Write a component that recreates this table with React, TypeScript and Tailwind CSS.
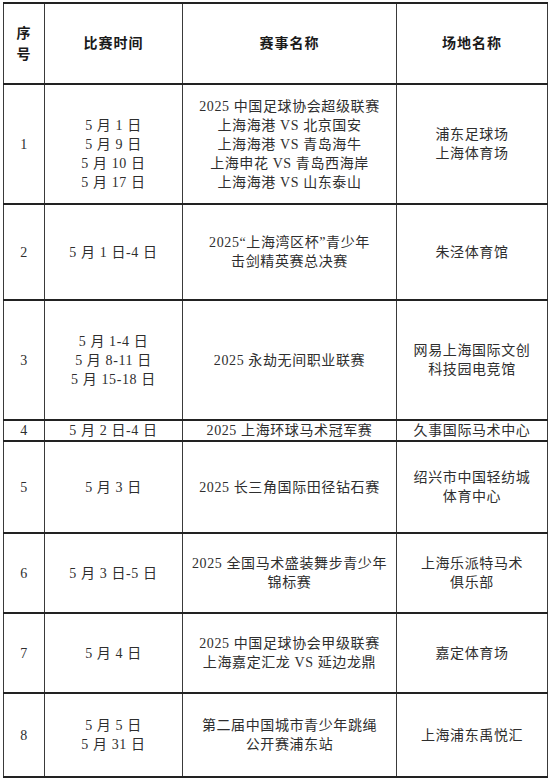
import React from 'react';

type Row = {
    no: string;
    h: string;
    dates: string[];
    events: string[];
    venues: string[];
};

const rows: Row[] = [
    {
        no: '1',
        h: 'h-[120px]',
        dates: ['\u00a0', '5 月 1 日', '5 月 9 日', '5 月 10 日', '5 月 17 日'],
        events: [
            '2025 中国足球协会超级联赛',
            '上海海港 VS 北京国安',
            '上海海港 VS 青岛海牛',
            '上海申花 VS 青岛西海岸',
            '上海海港 VS 山东泰山',
        ],
        venues: ['浦东足球场', '上海体育场'],
    },
    {
        no: '2',
        h: 'h-[96px]',
        dates: ['5 月 1 日-4 日'],
        events: ['2025“上海湾区杯”青少年', '击剑精英赛总决赛'],
        venues: ['朱泾体育馆'],
    },
    {
        no: '3',
        h: 'h-[120px]',
        dates: ['5 月 1-4 日', '5 月 8-11 日', '5 月 15-18 日'],
        events: ['2025 永劫无间职业联赛'],
        venues: ['网易上海国际文创', '科技园电竞馆'],
    },
    {
        no: '4',
        h: 'h-[21px]',
        dates: ['5 月 2 日-4 日'],
        events: ['2025 上海环球马术冠军赛'],
        venues: ['久事国际马术中心'],
    },
    {
        no: '5',
        h: 'h-[92px]',
        dates: ['5 月 3 日'],
        events: ['2025 长三角国际田径钻石赛'],
        venues: ['绍兴市中国轻纺城', '体育中心'],
    },
    {
        no: '6',
        h: 'h-[80px]',
        dates: ['5 月 3 日-5 日'],
        events: ['2025 全国马术盛装舞步青少年', '锦标赛'],
        venues: ['上海乐派特马术', '俱乐部'],
    },
    {
        no: '7',
        h: 'h-[80px]',
        dates: ['5 月 4 日'],
        events: ['2025 中国足球协会甲级联赛', '上海嘉定汇龙 VS 延边龙鼎'],
        venues: ['嘉定体育场'],
    },
    {
        no: '8',
        h: 'h-[84px]',
        dates: ['5 月 5 日', '5 月 31 日'],
        events: ['第二届中国城市青少年跳绳', '公开赛浦东站'],
        venues: ['上海浦东禹悦汇'],
    },
];

const Lines = ({ items }: { items: string[] }) => (
    <>
        {items.map((t, i) => (
            <div key={i} className="whitespace-nowrap">
                {t}
            </div>
        ))}
    </>
);

// horizontal rules are heavier than the vertical ones in the scan
const cell = 'border-x border-y-2 border-x-[#3a3a3a] border-y-[#222] p-0 text-center align-middle';

export default function App() {
    return (
        <div className="w-[550px] h-[778px] bg-white pt-[2px] pl-[3px] font-['Liberation_Serif','Noto_Sans_CJK_SC',serif] text-[14px] leading-[19px] tracking-[0.6px] text-[#2e2e2e]">
            <table className="w-[544px] table-fixed border-collapse">
                <colgroup>
                    <col className="w-[41px]" />
                    <col className="w-[138px]" />
                    <col className="w-[214px]" />
                    <col className="w-[151px]" />
                </colgroup>
                <thead>
                    <tr className="h-[81px] font-bold text-[14px] tracking-[1px] text-[#1a1a1a]">
                        <th className={cell}>
                            <div className="leading-[21px]">序</div>
                            <div className="leading-[21px]">号</div>
                        </th>
                        <th className={cell}>比赛时间</th>
                        <th className={cell}>赛事名称</th>
                        <th className={cell}>场地名称</th>
                    </tr>
                </thead>
                <tbody>
                    {rows.map((r) => (
                        <tr key={r.no} className={r.h}>
                            <td className={cell}>{r.no}</td>
                            <td className={cell}>
                                <Lines items={r.dates} />
                            </td>
                            <td className={cell}>
                                <Lines items={r.events} />
                            </td>
                            <td className={cell}>
                                <Lines items={r.venues} />
                            </td>
                        </tr>
                    ))}
                </tbody>
            </table>
        </div>
    );
}
